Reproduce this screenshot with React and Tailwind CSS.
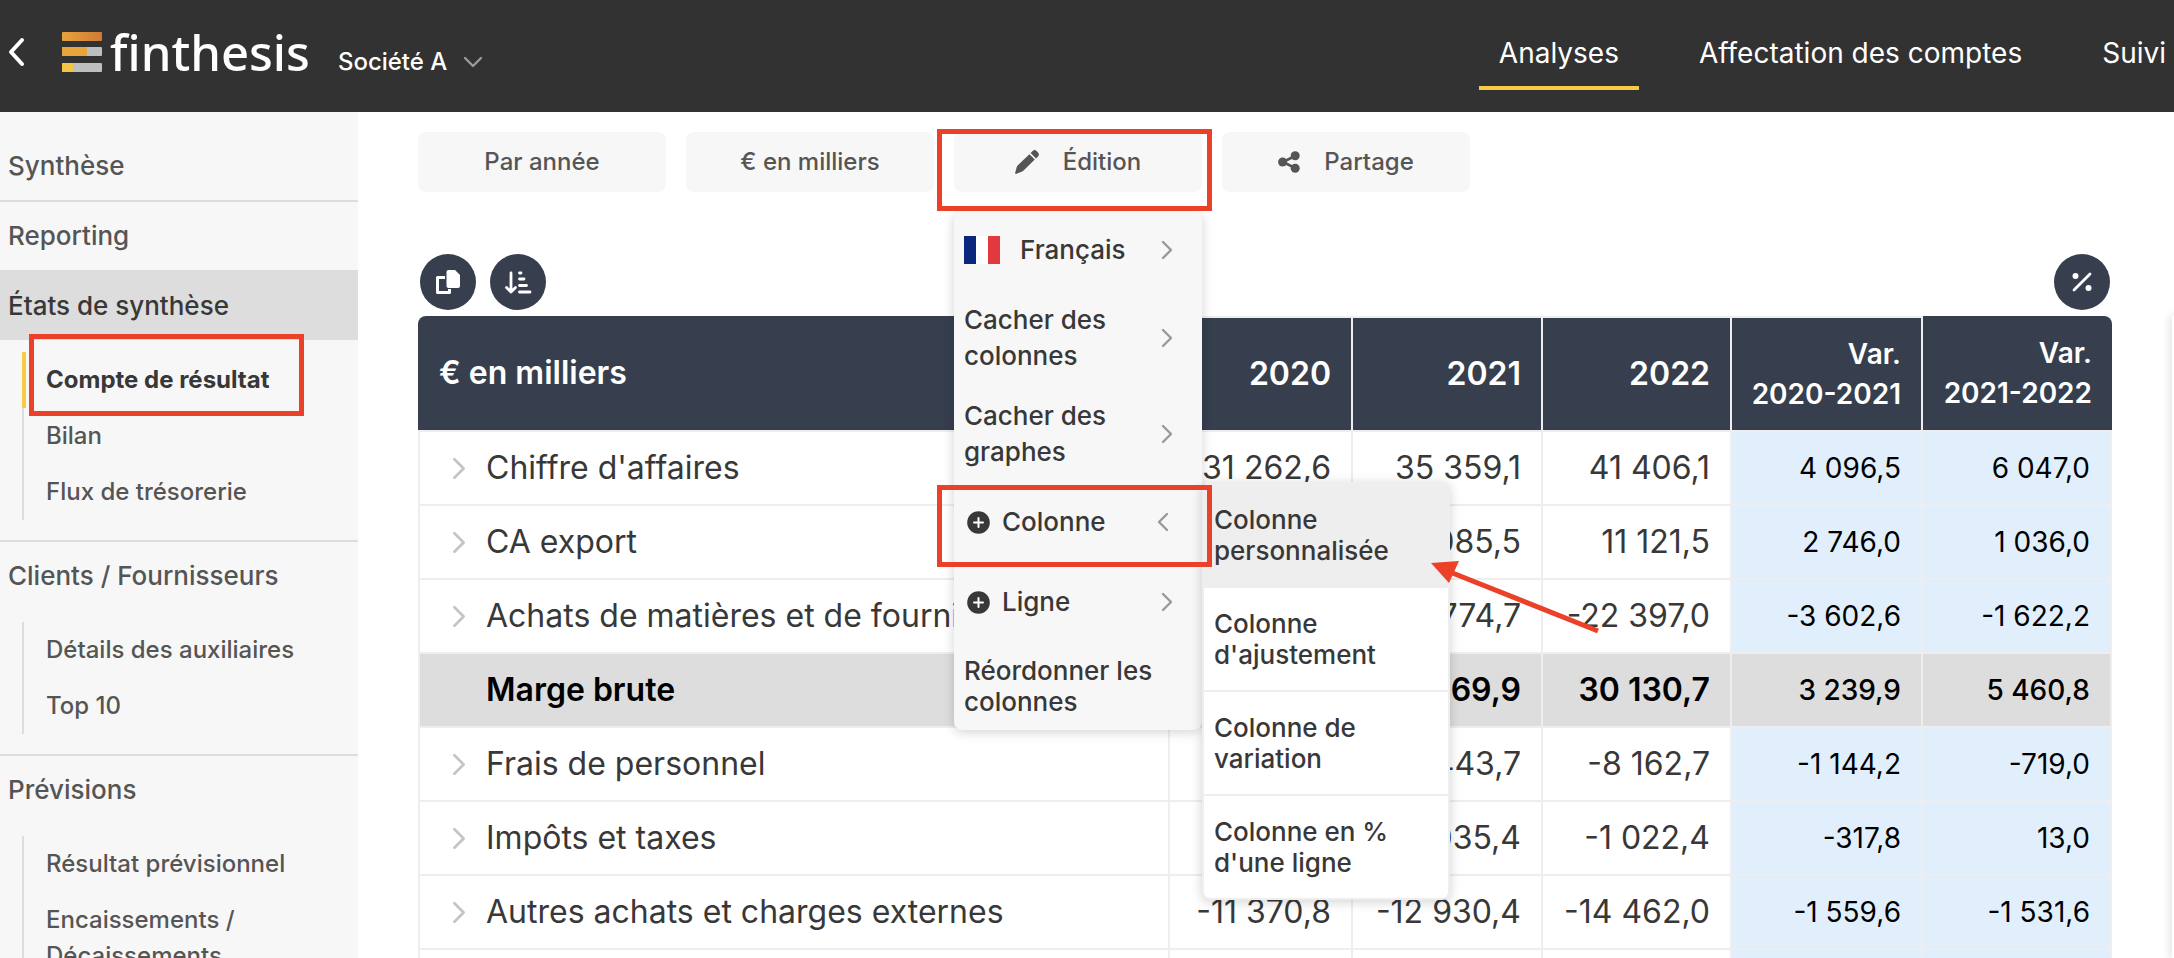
const ANNOTATION = "pointer-events-none absolute z-30 h-[82px] w-[275px] border-5 border-[#ea4128]";

function Chevron({ dir = "right", large = false, className = "" }) {
  const d = { right: "M2 2l8 8-8 8", left: "M10 2l-8 8 8 8", down: "M2 2l8 8 8-8" }[dir];
  const down = dir === "down";
  return (
    <svg
      width={down ? 20 : large ? 14 : 12}
      height={down ? 12 : large ? 23 : 20}
      viewBox={down ? "0 0 20 12" : "0 0 12 20"}
      fill="none"
      stroke="currentColor"
      strokeWidth="2.4"
      strokeLinecap="round"
      strokeLinejoin="round"
      className={className}
      aria-hidden="true"
    >
      <path d={d} />
    </svg>
  );
}

function PencilIcon() {
  return (
    <svg width="24" height="24" viewBox="0 0 24 24" fill="currentColor" aria-hidden="true">
      <path d="M14.400 4.200l5.400 5.400L8.600 20.600q-.6.6-1.400.8L1.400 23.800q-1.500.4-1.200-1.100L1.800 16.800q.2-.8.8-1.400z" />
      <path d="M15.600 3l2-2q2-1.800 4 0l1.400 1.400q1.800 2 0 4l-2 2z" />
    </svg>
  );
}

function ShareIcon() {
  return (
    <svg width="22" height="22" viewBox="0 0 22 22" aria-hidden="true">
      <path d="M17 5L5 11l12 6" fill="none" stroke="currentColor" strokeWidth="2.600" />
      <circle cx="17.200" cy="4.800" r="4.500" fill="currentColor" />
      <circle cx="4.600" cy="11" r="4.500" fill="currentColor" />
      <circle cx="17.200" cy="17.200" r="4.500" fill="currentColor" />
    </svg>
  );
}

function PlusIcon() {
  return (
    <svg width="23" height="23" viewBox="0 0 23 23" className="mr-3 ml-[3px]" aria-hidden="true">
      <circle cx="11.500" cy="11.500" r="11.300" fill="currentColor" />
      <path d="M11.500 7v9M7 11.500h9" stroke="#fff" strokeWidth="2" strokeLinecap="round" />
    </svg>
  );
}

function Logo() {
  return (
    <a href="#" className="flex items-center gap-2 text-white">
      <svg width="40" height="40" viewBox="0 0 40 40" aria-hidden="true">
        <defs>
          <linearGradient id="bar" x1="0" x2="1">
            <stop offset="0" stopColor="#e8a33d" />
            <stop offset="1" stopColor="#cf7a35" />
          </linearGradient>
        </defs>
        <rect width="40" height="9" rx="1" fill="url(#bar)" />
        <rect y="15" width="40" height="9" rx="1" fill="#bdbec0" />
        <rect y="15" width="25" height="9" rx="1" fill="#e8a53c" />
        <rect y="31" width="40" height="9" rx="1" fill="#bdbec0" />
        <rect y="31" width="11" height="9" rx="1" fill="#f3c443" />
      </svg>
      <span className="font-['Noto_Sans',sans-serif] text-[49px] leading-[56px] font-medium">finthesis</span>
    </a>
  );
}

function Header() {
  return (
    <header className="flex h-28 items-start overflow-hidden bg-[#323232] text-white">
      <div className="flex h-26 flex-1 items-center pl-2">
        <button type="button" aria-label="Retour">
          <svg width="18" height="30" viewBox="0 0 18 30" fill="none" stroke="currentColor" strokeWidth="4" strokeLinecap="round" strokeLinejoin="round">
            <path d="M14 3L3 15l11 12" />
          </svg>
        </button>
        <div className="ml-9">
          <Logo />
        </div>
        <button type="button" className="mt-5 ml-7 flex items-center gap-4 text-2xl font-medium">
          Société A
          <Chevron dir="down" className="text-[#9a9a9a]" />
        </button>
      </div>
      <nav className="-mr-3 flex gap-10 text-[28px] leading-[34px] whitespace-nowrap">
        <a href="#" className="h-[90px] border-b-4 border-[#f7cb45] px-5 pt-9">Analyses</a>
        <a href="#" className="px-5 pt-9">Affectation des comptes</a>
        <a href="#" className="px-5 pt-9">Suivi</a>
      </nav>
    </header>
  );
}

const SECTIONS = [
  { title: "Synthèse" },
  { title: "Reporting" },
  { title: "États de synthèse", active: true, items: ["Compte de résultat", "Bilan", "Flux de trésorerie"] },
  { title: "Clients / Fournisseurs", items: ["Détails des auxiliaires", "Top 10"] },
  { title: "Prévisions", items: ["Résultat prévisionnel", "Encaissements / Décaissements"] },
];

function Sidebar() {
  return (
    <aside className="w-[358px] shrink-0 bg-[#f7f7f7] pt-5 text-[#555]">
      {SECTIONS.map((s, i) => (
        <section key={s.title} className={i ? "border-t-2 border-[#ddd]" : ""}>
          <a
            href="#"
            className={`flex h-[68px] items-center pb-[2px] pl-2 text-[26px] font-medium ${s.active ? "bg-[#ddd] text-[#383838]" : ""}`}
          >
            {s.title}
          </a>
          {s.items && (
            <ul className="mt-3 mb-5 ml-[22px] text-2xl leading-9 font-medium">
              {s.items.map((item) => {
                const current = item === "Compte de résultat";
                return (
                  <li key={item} className="relative">
                    <a
                      href="#"
                      className={`block py-[10px] pr-6 ${
                        current
                          ? "border-l-4 border-[#f7cb45] pl-5 font-bold text-[#383838]"
                          : "border-l-2 border-[#ddd] pl-[22px]"
                      }`}
                    >
                      {item}
                    </a>
                    {current && <span className={`${ANNOTATION} -top-[18px] left-[7px]`} />}
                  </li>
                );
              })}
            </ul>
          )}
        </section>
      ))}
    </aside>
  );
}

const MENU_ROW = "flex w-full items-center pl-[10px] pr-[29px] text-left";

function EditionMenu() {
  return (
    <div className="absolute top-20 left-0 z-20 w-[248px] rounded-lg bg-[#f7f7f7] text-[26px] leading-9 font-medium text-[#383838] shadow-[0_2px_12px_rgba(0,0,0,0.18)]">
      <button type="button" className={`${MENU_ROW} h-[78px] pb-[2px]`}>
        <svg width="36" height="28" viewBox="0 0 36 28" className="mr-5" aria-hidden="true">
          <rect width="12" height="28" fill="#0b267d" />
          <rect x="12" width="12" height="28" fill="#fff" />
          <rect x="24" width="12" height="28" fill="#e1393d" />
        </svg>
        <span className="flex-1">Français</span>
        <Chevron className="text-[#999]" />
      </button>
      {["Cacher des colonnes", "Cacher des graphes"].map((label) => (
        <button key={label} type="button" className={`${MENU_ROW} h-24`}>
          <span className="flex-1 pr-8">{label}</span>
          <Chevron className="text-[#999]" />
        </button>
      ))}
      <div className="relative">
        <button type="button" className={`${MENU_ROW} h-20`}>
          <PlusIcon />
          <span className="flex-1">Colonne</span>
          <Chevron dir="left" className="mr-1 text-[#999]" />
        </button>
        <span className={`${ANNOTATION} top-[3px] -left-[17px]`} />
        <ColumnSubmenu />
      </div>
      <button type="button" className={`${MENU_ROW} h-20`}>
        <PlusIcon />
        <span className="flex-1">Ligne</span>
        <Chevron className="text-[#999]" />
      </button>
      <button type="button" className={`${MENU_ROW} h-[88px] leading-[31px]`}>
        Réordonner les colonnes
      </button>
    </div>
  );
}

function ColumnSubmenu() {
  const items = [
    ["Colonne", "personnalisée"],
    ["Colonne", "d'ajustement"],
    ["Colonne de", "variation"],
    ["Colonne en %", "d'une ligne"],
  ];
  return (
    <div className="absolute top-0 left-full w-[248px]">
      <ul className="overflow-hidden rounded-lg border-2 border-[#eee] bg-white leading-[31px] shadow-[0_2px_12px_rgba(0,0,0,0.18)]">
        {items.map(([a, b], i) => (
          <li key={b} className={i < 3 ? "border-b-2 border-[#eee]" : ""}>
            <button type="button" className={`h-[102px] w-full pl-[10px] text-left ${i === 0 ? "bg-[#eee]" : ""}`}>
              {a}
              <br />
              {b}
            </button>
          </li>
        ))}
      </ul>
      <svg width="172" height="76" viewBox="0 0 172 76" className="pointer-events-none absolute top-[78px] left-[228px]" aria-hidden="true">
        <path d="M20 12L168 71" stroke="#ea4128" strokeWidth="5" fill="none" />
        <path d="M1 3L29 1L19 23Z" fill="#ea4128" />
      </svg>
    </div>
  );
}

const TOOL = "flex h-[60px] w-[248px] items-center justify-center gap-6 rounded-lg bg-[#f7f7f7]";

function Toolbar() {
  return (
    <div className="flex gap-5 text-2xl font-medium text-[#555]">
      <button type="button" className={TOOL}>Par année</button>
      <button type="button" className={TOOL}>€ en milliers</button>
      <div className="relative">
        <button type="button" className={TOOL}>
          <PencilIcon />
          Édition
        </button>
        <span className={`${ANNOTATION} -top-[3px] -left-[17px]`} />
        <EditionMenu />
      </div>
      <button type="button" className={TOOL}>
        <ShareIcon />
        Partage
      </button>
    </div>
  );
}

const ROUND = "flex size-14 items-center justify-center rounded-full bg-[#373f4f] text-white";

function TableActions() {
  return (
    <div className="flex gap-[14px] px-[2px]">
      <button type="button" aria-label="Copier" className={ROUND}>
        <svg width="24" height="24" viewBox="0 0 24 24" aria-hidden="true">
          <path d="M9 7.500H1.500v15h12V19" fill="none" stroke="currentColor" strokeWidth="3" strokeLinejoin="round" />
          <path d="M12.500 0h6.500l5 5v11a2 2 0 0 1-2 2h-9.500a2 2 0 0 1-2-2V2a2 2 0 0 1 2-2z" fill="currentColor" />
        </svg>
      </button>
      <button type="button" aria-label="Trier" className={ROUND}>
        <svg width="27" height="23" viewBox="0 0 27 23" fill="none" stroke="currentColor" strokeWidth="2.800" strokeLinecap="round" strokeLinejoin="round" aria-hidden="true">
          <path d="M6 2v19M1.500 16.500L6 21l4.500-4.500M14.500 2h1.500M14.500 8h4.500M14.500 14.500h7M14.500 21h10.500" />
        </svg>
      </button>
      <button type="button" aria-label="Pourcentage" className={`${ROUND} ml-auto`}>
        <svg width="20" height="20" viewBox="0 0 20 20" aria-hidden="true">
          <path d="M2 18L18 2" stroke="currentColor" strokeWidth="2.800" strokeLinecap="round" />
          <circle cx="3.500" cy="4" r="3" fill="currentColor" />
          <circle cx="16.500" cy="16" r="3" fill="currentColor" />
        </svg>
      </button>
    </div>
  );
}

const ROWS = [
  ["Chiffre d'affaires", "31 262,6", "35 359,1", "41 406,1", "4 096,5", "6 047,0"],
  ["CA export", "7 339,5", "10 085,5", "11 121,5", "2 746,0", "1 036,0"],
  ["Achats de matières et de fournitures", "-17 172,1", "-20 774,7", "-22 397,0", "-3 602,6", "-1 622,2"],
  ["Marge brute", "21 430,0", "24 669,9", "30 130,7", "3 239,9", "5 460,8"],
  ["Frais de personnel", "-6 299,5", "-7 443,7", "-8 162,7", "-1 144,2", "-719,0"],
  ["Impôts et taxes", "-717,6", "-1 035,4", "-1 022,4", "-317,8", "13,0"],
  ["Autres achats et charges externes", "-11 370,8", "-12 930,4", "-14 462,0", "-1 559,6", "-1 531,6"],
  ["", "", "", "", "", ""],
];

function ResultTable() {
  return (
    <table className="w-full table-fixed border-separate border-spacing-0 text-right text-[32px] leading-10 text-[#383838]">
      <colgroup>
        <col />
        <col className="w-[183px]" />
        <col className="w-[190px]" />
        <col className="w-[189px]" />
        <col className="w-[191px]" />
        <col className="w-[189px]" />
      </colgroup>
      <thead>
        <tr className="h-[116px] text-white">
          <th className="rounded-tl-lg border-b-2 border-[#eee] bg-[#373f4f] pl-[21px] text-left font-semibold">€ en milliers</th>
          {["2020", "2021", "2022"].map((y) => (
            <th key={y} className="border-t-2 border-r-2 border-b-2 border-[#eee] bg-[#373f4f] pr-5 font-semibold">{y}</th>
          ))}
          <th className="border-t-2 border-r-2 border-b-2 border-[#eee] bg-[#373f4f] pr-5 text-[28px] font-semibold">Var.<br />2020-2021</th>
          <th className="rounded-tr-lg border-b-2 border-[#eee] bg-[#373f4f] pr-5 text-[28px] font-semibold">Var.<br />2021-2022</th>
        </tr>
      </thead>
      <tbody>
        {ROWS.map(([label, ...values], r) => {
          const total = label === "Marge brute";
          return (
            <tr key={label || r} className={`h-[74px] ${total ? "bg-[#ddd] font-semibold text-black" : ""}`}>
              <td className="border-x-2 border-b-2 border-[#eee] pl-8 text-left">
                <div className="flex items-center gap-5 overflow-hidden whitespace-nowrap">
                  <span className="w-[14px] shrink-0">{!total && label && <Chevron large className="text-[#c4c5c7]" />}</span>
                  {label}
                </div>
              </td>
              {values.map((v, c) => (
                <td
                  key={c}
                  className={`border-r-2 border-b-2 border-[#eee] pr-5 whitespace-nowrap ${c > 2 ? "text-[28px] text-black" : ""} ${c > 2 && !total ? "bg-[#e1effd]" : ""} ${c > 2 && total ? "font-medium" : ""}`}
                >
                  {v.replace(" ", "\u00a0")}
                </td>
              ))}
            </tr>
          );
        })}
      </tbody>
    </table>
  );
}

export default function App() {
  return (
    <div className="flex h-screen flex-col overflow-hidden bg-white font-['Inter',sans-serif]">
      <Header />
      <div className="flex min-h-0 flex-1">
        <Sidebar />
        <main className="min-w-0 flex-1 py-5 pr-[60px] pl-[60px]">
          <Toolbar />
          <div className="mt-[62px] mb-[6px]">
            <TableActions />
          </div>
          <ResultTable />
        </main>
        <div className="mt-[204px] -mr-[2px] w-1 shrink-0 bg-white shadow-[0_0_10px_rgba(0,0,0,0.25)]" />
      </div>
    </div>
  );
}
